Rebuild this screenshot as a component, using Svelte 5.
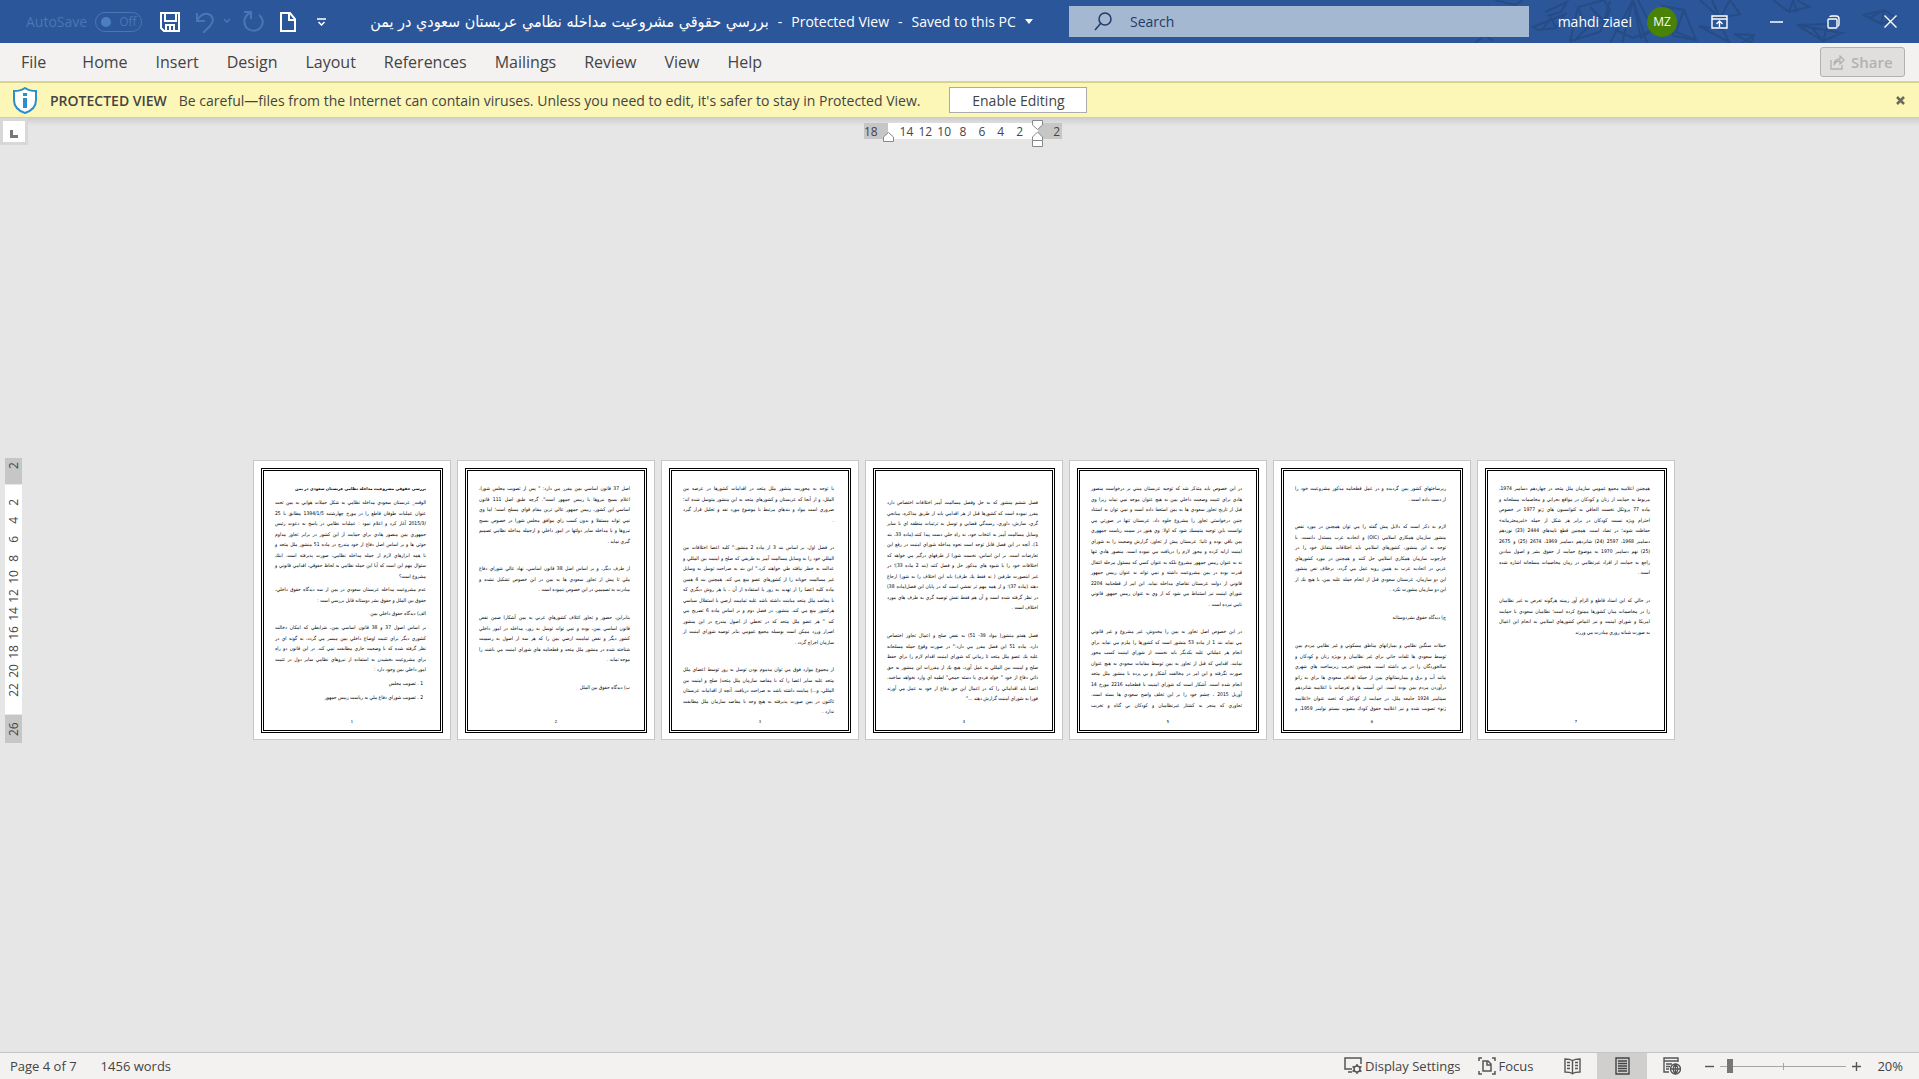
<script>
  const tabs = ['File', 'Home', 'Insert', 'Design', 'Layout', 'References', 'Mailings', 'Review', 'View', 'Help'];
  const across = ['14', '12', '10', '8', '6', '4', '2'];
  const down = ['2', '4', '6', '8', '10', '12', '14', '16', '18', '20', '22'];
  let zoom = $state(20);

  const pages = [
    {
      tight: true,
      paras: [
        { title: true, lines: ['بررسي حقوقي مشروعيت مداخله نظامي عربستان سعودي در يمن'] },
        {
          lines: [
            'الوقت_ عربستان سعودي مداخله نظامي به شكل حملات هوايي به يمن تحت',
            'عنوان عمليات طوفان قاطع را در مورخ چهارشنبه 1394/1/5 مطابق با 25',
            '/2015/3 آغاز كرد و اعلام نمود : عمليات نظامي در پاسخ به دعوت رئيس',
            'جمهوري يمن منصور هادي براي حمايت از اين كشور در برابر تجاوز مداوم',
            'حوثي ها و بر اساس اصل دفاع از خود مندرج در ماده 51 منشور ملل متحد و',
            'با همه ابزارهاي لازم از جمله مداخله نظامي، صورت پذيرفته است. اينك',
            'سئوال مهم اين است كه آيا اين حمله نظامي به لحاظ حقوقي، اقدامي قانوني و',
            'مشروع است؟'
          ]
        },
        {
          lines: [
            'عدم مشروعيت مداخله عربستان سعودي در يمن از سه ديدگاه حقوق داخلي،',
            'حقوق بين الملل و حقوق بشر دوستانه قابل بررسي است :'
          ]
        },
        { lines: ['الف) ديدگاه حقوق داخلي يمن'] },
        {
          lines: [
            'بر اساس اصول 37 و 38 قانون اساسي يمن، شرايطي كه امكان دخالت',
            'كشوري ديگر براي تثبيت اوضاع داخلي يمن ميسر مي گردد، به گونه اي در',
            'نظر گرفته شده كه با وضعيت جاري مطابقت نمي كند. در اين قانون دو راه',
            'براي مشروعيت بخشيدن به استفاده از نيروهاي نظامي ساير دول در تثبيت',
            'امور داخلي يمن وجود دارد :'
          ]
        },
        { item: true, lines: ['1 . تصويب مجلس'] },
        { item: true, lines: ['2 . تصويب شوراي دفاع ملي به رياست رييس جمهور'] }
      ]
    },
    {
      paras: [
        {
          lines: [
            'اصل 37 قانون اساسي يمن مقرر مي دارد: " پس از تصويب مجلس شورا،',
            'اعلام بسيج نيروها با رييس جمهور است". گرچه طبق اصل 111 قانون',
            'اساسي اين كشور، رييس جمهور عالي ترين مقام قواي مسلح است؛ اما وي',
            'نمي تواند مستقلا و بدون كسب راي موافق مجلس شورا در خصوص بسيج',
            'نيروها و يا مداخله ساير دولتها در امور داخلي و ازجمله مداخله نظامي تصميم',
            'گيري نمايد .'
          ]
        },
        {
          lines: [
            'از طرف ديگر، و بر اساس اصل 38 قانون اساسي، نهاد عالي شوراي دفاع',
            'ملي تا پيش از تجاوز سعودي ها به يمن در اين خصوص تشكيل نشده و',
            'مبادرت به تصميمي در اين خصوص ننموده است .'
          ]
        },
        {
          lines: [
            'بنابراين، حضور و تجاوز ائتلاف كشورهاي عربي به يمن آشكارا ضمن نقض',
            'قانون اساسي يمن، بوده و نمي تواند توسل به زور، مداخله در امور داخلي',
            'كشور ديگر و نقض تماميت ارضي يمن را كه هر سه از اصول به رسميت',
            'شناخته شده در منشور ملل متحد و قطعنامه هاي شوراي امنيت مي باشند را',
            'موجه نمايد .'
          ]
        },
        { lines: ['ب) ديدگاه حقوق بين الملل'] }
      ]
    },
    {
      paras: [
        {
          lines: [
            'با توجه به محوريت منشور ملل متحد در اقدامات كشورها در عرصه بين',
            'الملل، و از آنجا كه عربستان و كشورهاي متحد به اين منشور متوسل شده اند؛',
            'ضروري است مواد و بندهاي مرتبط با موضوع مورد نقد و تحليل قرار گيرد',
            '.'
          ]
        },
        {
          lines: [
            'در فصل اول، بر اساس بند 3 از ماده 2 منشور:" كليه اعضا اختلافات بين',
            'المللي خود را به وسايل مسالمت آميز به طريقي كه صلح و امنيت بين المللي و',
            'عدالت به خطر نيافتد طي خواهند كرد." اين بند به صراحت توسل به وسايل',
            'غير مسالمت جويانه را از كشورهاي عضو منع مي كند. همچنين بند 4 همين',
            'ماده كليه اعضا را از تهديد به زور يا استفاده از آن ، يا هر روش ديگري كه',
            'با مقاصد ملل متحد مباينت داشته باشد عليه تماميت ارضي يا استقلال سياسي',
            'هركشور منع مي كند. منشور، در فصل دوم و بر اساس ماده 6 تصريح مي',
            'كند " هر عضو ملل متحد كه در تخطي از اصول مندرج در اين منشور',
            'اصرار ورزد ممكن است بوسيله مجمع عمومي بنابر توصيه شوراي امنيت از',
            'سازمان اخراج گردد .'
          ]
        },
        {
          lines: [
            'از مجموع موارد فوق مي توان مذموم بودن توسل به زور توسط اعضاي ملل',
            'متحد عليه ساير اعضا را كه با مقاصد سازمان ملل متحد( صلح و امنيت بين',
            'المللي، و...) مباينت داشته باشد به صراحت دريافت. آنچه از اقدامات عربستان',
            'تاكنون در يمن صورت پذيرفته به هيچ وجه با مقاصد سازمان ملل مطابقت',
            'ندارد .'
          ]
        }
      ]
    },
    {
      lowered: true,
      paras: [
        {
          lines: [
            'فصل ششم منشور كه به حل وفصل مسالمت آميز اختلافات اختصاص دارد',
            'مقرر نموده است كه كشورها قبل از هر اقدامي بايد از طريق مذاكره، ميانجي',
            'گري، سازش، داوري، رسيدگي قضايي و توسل به ترتيبات منطقه اي يا ساير',
            'وسايل مسالمت آميز به انتخاب خود، به راه حلي دست پيدا كنند.(ماده 33، بند',
            '1). آنچه در اين فصل قابل توجه است نحوه مداخله شوراي امنيت در رفع اين',
            'تعارضات است. بر اين اساس، نخست شورا از طرفهاي درگير مي خواهد كه',
            'اختلافات خود را با شيوه هاي مذكور حل و فصل كنند (بند 2 ماده 33)؛ در',
            'غير اينصورت طرفين ( نه فقط يك طرف) بايد اين اختلاف را به شورا ارجاع',
            'دهند (ماده 37)؛ و از همه مهم تر نقشي است كه در پايان اين فصل(ماده 38)',
            'در نظر گرفته شده است و آن هم فقط نقش توصيه گري به طرف هاي مورد',
            'اختلاف است .'
          ]
        },
        {
          lines: [
            'فصل هفتم منشور( مواد 39- 51) به نقض صلح و اعمال تجاوز اختصاص',
            'دارد. ماده 51 اين فصل مقرر مي دارد:" در صورت وقوع حمله مسلحانه',
            'عليه يك عضو ملل متحد تا زماني كه شوراي امنيت اقدام لازم را براي حفظ',
            'صلح و امنيت بين المللي به عمل آورد، هيچ يك از مقررات اين منشور به حق',
            'ذاتي دفاع از خود " خواه فردي يا دسته جمعي" لطمه اي وارد نخواهد ساخت.',
            'اعضا بايد اقداماتي را كه در اعمال اين حق دفاع از خود به عمل مي آورند',
            'فورا به شوراي امنيت گزارش دهند ..."'
          ]
        }
      ]
    },
    {
      paras: [
        {
          lines: [
            'در اين خصوص بايد متذكر شد كه توجيه عربستان مبني بر درخواست منصور',
            'هادي براي تثبيت وضعيت داخلي يمن به هيچ عنوان موجه نمي نمايد زيرا وي',
            'قبل از تاريخ تجاوز سعودي ها به يمن استعفا داده است و نمي توان به استناد',
            'چنين درخواستي تجاوز را مشروع جلوه داد. عربستان تنها در صورتي مي',
            'توانست باين توجيه متمسك شود كه اولا: وي هنوز در سمت رياست جمهوري',
            'يمن باقي بوده و ثانيا: عربستان پيش از تجاوز، گزارش وضعيت را به شوراي',
            'امنيت ارايه كرده و مجوز لازم را دريافت مي نموده است. منصور هادي تنها',
            'نه به عنوان رييس جمهور مشروع بلكه به عنوان كسي كه مسئول مرحله انتقال',
            'قدرت بوده در يمن مشروعيت داشته و نمي تواند به عنوان رييس جمهور',
            'قانوني از دولت عربستان تقاضاي مداخله نمايد. اين امر از قطعنامه 2204',
            'شوراي امنيت نيز استنباط مي شود كه از وي به عنوان رييس جمهور قانوني',
            'نامي نبرده است .'
          ]
        },
        {
          open: true,
          lines: [
            'در اين خصوص اصل تجاوز به يمن را مخدوش، غير مشروع و غير قانوني',
            'مي نمايد بند 1 از ماده 53 منشور است كه كشورها را ملزم مي نمايد براي',
            'انجام هر عملياتي عليه يكديگر بايد نخست از شوراي امنيت كسب مجوز',
            'نمايند. اقدامي كه قبل از تجاوز به يمن توسط مقامات سعودي به هيچ عنوان',
            'صورت نگرفته و اين امر در مخالفت آشكار و بي پرده با منشور ملل متحد',
            'انجام شده است. آشكار است كه شوراي امنيت با قطعنامه 2216 مورخ 14',
            'آوريل 2015 ، چشم خود را بر اين تخلف واضح سعودي ها بسته است.',
            'تجاوزي كه منجر به كشتار غيرنظاميان و كودكان بي گناه و تخريب'
          ]
        }
      ]
    },
    {
      paras: [
        {
          lines: [
            'زيرساختهاي كشور يمن گرديده و در عمل قطعنامه مذكور مشروعيت خود را',
            'از دست داده است .'
          ]
        },
        {
          lines: [
            'لازم به ذكر است كه دلايل پيش گفته را مي توان همچنين در مورد نقض',
            'منشور سازمان همكاري اسلامي (OIC) و اتحاديه عرب مستدل دانست. با',
            'توجه به اين منشور، كشورهاي اسلامي بايد اختلافات متقابل خود را در',
            'چارچوب سازمان همكاري اسلامي حل كنند و همچنين در مورد كشورهاي',
            'عربي در اتحاديه عرب به همين رويه عمل مي گردد. برخلاف نص منشور',
            'اين دو سازمان، عربستان سعودي قبل از انجام حمله عليه يمن، با هيچ يك از',
            'اين دو سازمان مشورت نكرد .'
          ]
        },
        { lines: ['ج) ديدگاه حقوق بشردوستانه'] },
        {
          open: true,
          lines: [
            'حملات سنگين نظامي و بمبارانهاي مناطق مسكوني و غير نظامي مردم يمن',
            'توسط سعودي ها تلفات جاني براي غير نظاميان و بويژه زنان و كودكان و',
            'سالخوردگان را در پي داشته است. همچنين تخريب زيرساخت هاي شهري',
            'مانند آب و برق و بيمارستانهاي يمن از جمله اهداف سعودي ها براي به زانو',
            'درآوردن مردم يمن بوده است. اين آسيب ها و تعرضات با اعلاميه شانزدهم',
            'سپتامبر 1924 جامعه ملل، در حمايت از كودكان كه تحت عنوان «اعلاميه',
            'ژنو» تصويب شده و نيز اعلاميه حقوق كودك مصوب بيستم نوامبر 1959، و'
          ]
        }
      ]
    },
    {
      paras: [
        {
          lines: [
            'همچنين اعلاميه مجمع عمومي سازمان ملل متحد در چهاردهم دسامبر 1974،',
            'مربوط به حمايت از زنان و كودكان در مواقع بحراني و مخاصمات مسلحانه و',
            'ماده 77 پروتكل نخست الحاقي به كنوانسيون هاي ژنو 1977 در خصوص',
            'احترام ويژه نسبت كودكان در برابر هر شكل از حمله «غيرمحترمانه»',
            'حفاظت شوند؛ در تضاد است. همچنين قطع نامه‌هاي 2444 (23) نوزدهم',
            'دسامبر 1968، 2597 (24) شانزدهم دسامبر 1969، 2674 (25) و 2675',
            '(25) نهم دسامبر 1970 به موضوع حمايت از حقوق بشر و اصول بنيادين',
            'راجع به حمايت از افراد غيرنظامي در زمان مخاصمات مسلحانه اشاره شده',
            'است .'
          ]
        },
        {
          lines: [
            'در حالي كه اين اسناد قاطع و الزام آور زمينه هرگونه تعرض به غير نظاميان',
            'را در مخاصمات ميان كشورها ممنوع كرده است؛ نظاميان سعودي با حمايت',
            'امريكا و شوراي امنيت و نيز اغماض كشورهاي اسلامي به انجام اين اعمال',
            'به صورت شبانه روزي مبادرت مي ورزند'
          ]
        }
      ]
    }
  ];
</script>

<div class="app">
  <header class="titlebar">
    <svg class="pattern" viewBox="0 0 519 43" width="519" height="43" aria-hidden="true">
      <g fill="none" stroke="#264b85" stroke-width="2">
        <path d="M95 0l20 5 8-5M145 12l22-10-6 10-14 4M133 27l32-13-9 14-18 2zM143 29l8-11 5 10M170 41l8-34 26-7 6 10-10 22zM178 7l8 22 18-8 6-20M186 29l-12 12M204 21l-14-14M210 43l23-43 14 43M233 0l-11 43M233 0l8 38 14-10M215 30l18 8 20-8-15-30M262 6l22 4 12 30-22-4zM284 10l-8 22 20 8M300 0l20 18 20-4-10-14M312 0l8 18 10-18M299 26l30 16-6-12zM334 34l20 1-3 8zM342 43l12-8M373 0l16 12 20-5-12-7M389 12l4-12 4 12M397 25l45 8-19 8zM412 28l11 13 5-17-31 1M464 15l20-5-3 14zM470 18l14-8 12 8-15 6M75 43l10-8 8 6"/>
      </g>
    </svg>
    <div class="quick">
      <label class="autosave">AutoSave
        <button class="toggle" disabled><i></i>Off</button>
      </label>
      <button class="icon save" aria-label="Save">
        <svg width="20" height="20" viewBox="0 0 20 20" fill="none" stroke="#fff" stroke-width="2"><path d="M1 1h18v18H4l-3-3zM5 1v8h11V1M6 19v-6h8v6M10 14v4"/></svg>
      </button>
      <button class="icon undo" aria-label="Undo" disabled>
        <svg width="36" height="22" viewBox="0 0 36 22" fill="none" stroke="#4b75b3" stroke-width="2"><path d="M2 2v8h8M2 10c3-6 7-8 11-7 6 2 6 8 2 12l-7 7" /><path d="M29 8l3 3 3-3" stroke-width="1.5"/></svg>
      </button>
      <button class="icon redo" aria-label="Repeat" disabled>
        <svg width="21" height="21" viewBox="0 0 21 21" fill="none" stroke="#4b75b3" stroke-width="2"><path d="M1 1h7v7M7 2C1 5 0 11 3 16c4 5 11 5 15 0 3-4 2-9-2-12"/></svg>
      </button>
      <button class="icon new" aria-label="New">
        <svg width="16" height="20" viewBox="0 0 16 20" fill="none" stroke="#fff" stroke-width="2"><path d="M1 1h9l5 6v12H1zM9 1v7h6"/></svg>
      </button>
      <button class="icon more" aria-label="Customize Quick Access Toolbar">
        <svg width="10" height="8" viewBox="0 0 10 8" fill="none" stroke="#fff" stroke-width="1.5"><path d="M0 1h9M1.500 4l3 3 3-3"/></svg>
      </button>
    </div>
    <h1 class="doc"><bdi lang="fa" dir="rtl">بررسي حقوقي مشروعيت مداخله نظامي عربستان سعودي در يمن</bdi><span>-</span><span>Protected View</span><span>-</span><span>Saved to this PC</span><svg width="8" height="5" viewBox="0 0 8 5"><path d="M0 0h8L4 5z" fill="#fff"/></svg></h1>
    <label class="search">
      <svg width="18" height="19" viewBox="0 0 18 19" fill="none" stroke="#1f3b68" stroke-width="1.500"><circle cx="11" cy="7" r="6"/><path d="M7 11l-6 7"/></svg>
      <input type="text" placeholder="Search" aria-label="Search" />
    </label>
    <div class="account"><span>mahdi ziaei</span><span class="avatar">MZ</span></div>
    <div class="window">
      <button class="icon" aria-label="Ribbon Display Options"><svg width="17" height="14" viewBox="0 0 17 14" fill="none" stroke="#fff" stroke-width="1.400"><path d="M1 1h15v12H1zM1 4h15M8.500 12V6M5.500 9l3-3 3 3"/></svg></button>
      <div class="frame-buttons">
        <button class="icon" aria-label="Minimize"><svg width="13" height="14" viewBox="0 0 13 14" stroke="#fff" stroke-width="1.500"><path d="M0 7h13"/></svg></button>
        <button class="icon" aria-label="Restore"><svg width="13" height="14" viewBox="0 0 13 14" fill="none" stroke="#fff" stroke-width="1.400"><rect x="1" y="4" width="9" height="9" rx="1"/><path d="M3 2c0-1 1-1 2-1h4c2 0 3 1 3 3v5c0 1 0 2-1 2"/></svg></button>
        <button class="icon" aria-label="Close"><svg width="13" height="13" viewBox="0 0 13 13" stroke="#fff" stroke-width="1.400"><path d="M.5.5l12 12M12.500.5l-12 12"/></svg></button>
      </div>
    </div>
  </header>

  <nav class="ribbon">
    {#each tabs as tab}
      <button class="tab">{tab}</button>
    {/each}
    <button class="share" disabled>
      <svg width="15" height="15" viewBox="0 0 15 15" fill="none" stroke="#b3b1af" stroke-width="1.300"><path d="M1 5v9h11v-4M4 10c0-4 2-6 6-6V1l4 4-4 4V6C7 6 5 7 4 10z"/></svg>
      Share
    </button>
  </nav>

  <div class="notice">
    <svg width="24" height="27" viewBox="0 0 24 27"><path d="M12 1c3 2 7 3 11 3v9c0 7-5 11-11 13C6 24 1 20 1 13V4c4 0 8-1 11-3z" fill="#fff" stroke="#2b8fcf" stroke-width="2"/><path d="M10 6h4v3h-4zM10 11h4v10h-4z" fill="#2b8fcf"/></svg>
    <strong>PROTECTED VIEW</strong>
    <p>Be careful—files from the Internet can contain viruses. Unless you need to edit, it's safer to stay in Protected View.</p>
    <button class="enable">Enable Editing</button>
    <button class="dismiss" aria-label="Close message"><svg width="9" height="9" viewBox="0 0 9 9" stroke="#6b6a5c" stroke-width="2.500"><path d="M1 1l7 7M8 1L1 8"/></svg></button>
  </div>

  <main class="work">
    <div class="topruler">
      <button class="corner" aria-label="Tab selector"><svg width="8" height="8" viewBox="0 0 8 8"><path d="M0 0h3v5h5v3H0z" fill="#777"/></svg></button>
      <div class="hruler">
        <div class="edge left">18<svg class="mark" width="11" height="10" viewBox="0 0 11 10"><path d="M.5 9.500V5l5-4.500 5 4.500v4.500z" fill="#fff" stroke="#888"/></svg></div>
        <div class="ticks">{#each across as n}<span>{n}</span>{/each}</div>
        <div class="edge right">2<svg class="mark" width="11" height="28" viewBox="0 0 11 28"><path d="M.5.5h10V5l-5 4.500L.5 5zM.5 20.500V17l5-5 5 5v3.500zM.5 20.500h10v6H.5z" fill="#fff" stroke="#888"/></svg></div>
      </div>
    </div>
    <div class="canvas">
      <div class="vruler">
        <div class="vedge">2</div>
        <div class="vticks">{#each down as n}<span>{n}</span>{/each}</div>
        <div class="vedge low">26</div>
      </div>
      <div class="sheets">
        {#each pages as page, i}
          <article class="sheet" lang="fa" dir="rtl">
            <div class="frame" class:tight={page.tight} class:lowered={page.lowered}>
              {#each page.paras as para}
                <p class="para" class:title={para.title} class:item={para.item} class:open={para.open}>
                  {#each para.lines as line}<span class="line">{line}</span>{/each}
                </p>
              {/each}
              <span class="folio">{i + 1}</span>
            </div>
          </article>
        {/each}
      </div>
    </div>
  </main>

  <footer class="status">
    <span>Page 4 of 7</span>
    <span class="words">1456 words</span>
    <button class="tool display">
      <svg width="19" height="18" viewBox="0 0 19 18" fill="none" stroke="#555" stroke-width="1.500"><path d="M17 7V1H1v11h7M4 15h4"/><circle cx="13" cy="12" r="3"/><path d="M13 7v2M13 15v2M8.500 9.500l2 1M15.500 13.500l2 1M17.500 9.500l-2 1M10.500 13.500l-2 1"/></svg>
      Display Settings
    </button>
    <button class="tool focus">
      <svg width="18" height="18" viewBox="0 0 18 18" fill="none" stroke="#555" stroke-width="1.500"><path d="M4 1H1v3M14 1h3v3M4 17H1v-3M14 17h3v-3M5 4h5l3 3v7H5zM9 4v4h4"/></svg>
      Focus
    </button>
    <button class="view" aria-label="Read Mode"><svg width="17" height="17" viewBox="0 0 17 17" fill="none" stroke="#555" stroke-width="1.400"><path d="M8.500 2.500C6 1 4 1 1 1v13c3 0 5 0 7.500 1.500C11 14 13 14 16 14V1c-3 0-5 0-7.500 1.500zM8.500 2.500v14M3 4.500h3M3 7.500h3M3 10.500h3M11 4.500h3M11 7.500h3M11 10.500h3"/></svg></button>
    <button class="view on" aria-label="Print Layout"><svg width="15" height="18" viewBox="0 0 15 18" fill="none" stroke="#444" stroke-width="1.400"><path d="M1 1h13v16H1zM3 4h9M3 6.500h9M3 9h9M3 11.500h9M3 14h9"/></svg></button>
    <button class="view" aria-label="Web Layout"><svg width="18" height="18" viewBox="0 0 18 18" fill="none" stroke="#555" stroke-width="1.400"><path d="M15 5V1H1v14h5M1 4h14M3 7h6M3 9.500h4M3 12h3"/><circle cx="12.500" cy="12" r="5"/><path d="M7.500 12h10M12.500 7v10M12.500 7c-3 3-3 7 0 10M12.500 7c3 3 3 7 0 10"/></svg></button>
    <button class="step" aria-label="Zoom Out"><svg width="9" height="9" viewBox="0 0 9 9" stroke="#555" stroke-width="1.400"><path d="M0 4.500h9"/></svg></button>
    <input class="zoom" type="range" min="10" max="190" bind:value={zoom} aria-label="Zoom" />
    <button class="step" aria-label="Zoom In"><svg width="9" height="9" viewBox="0 0 9 9" stroke="#555" stroke-width="1.400"><path d="M0 4.500h9M4.500 0v9"/></svg></button>
    <span class="percent">{zoom}%</span>
  </footer>
</div>

<style>
  :global(body) { margin: 0; }
  .app {
    display: flex;
    flex-direction: column;
    min-height: 100vh;
    font-family: "Open Sans", "DejaVu Sans", sans-serif;
    font-size: 14px;
    color: #444;
    background: #e6e6e6;
  }
  button, input { font: inherit; color: inherit; }
  button { border: 0; background: none; padding: 0; display: flex; align-items: center; }
  svg { display: block; flex: none; }

  .titlebar {
    position: relative;
    display: flex;
    align-items: center;
    height: 43px;
    background: #2b579a;
    color: #fff;
    white-space: nowrap;
  }
  .pattern { position: absolute; right: 0; top: 0; }
  .quick { display: flex; align-items: center; padding-left: 26px; }
  .autosave { display: flex; align-items: center; gap: 8px; color: #4b75b3; font-size: 14px; }
  .toggle {
    box-sizing: border-box;
    width: 47px;
    height: 20px;
    border: 1px solid #4b75b3;
    border-radius: 10px;
    padding-left: 5px;
    gap: 8px;
    font-size: 12px;
    color: #4b75b3;
  }
  .toggle i { width: 10px; height: 10px; border-radius: 5px; background: #4b7fc0; }
  .save { margin-left: 18px; }
  .undo { margin-left: 15px; }
  .redo { margin-left: 12px; }
  .new { margin-left: 16px; }
  .more { margin-left: 21px; }
  .doc {
    display: flex;
    align-items: center;
    gap: 9px;
    margin: 0 0 0 43px;
    font-size: 14px;
    font-weight: 400;
    line-height: 20px;
  }
  .doc bdi { font-family: "DejaVu Sans Condensed", "DejaVu Sans", sans-serif; font-size: 16px; }
  .search {
    position: relative;
    display: flex;
    align-items: center;
    flex: 0 1 410px;
    height: 31px;
    margin-left: auto;
    padding: 0 25px;
    gap: 18px;
    background: #a5b8d1;
  }
  .search input { flex: 1; min-width: 0; padding: 0; border: 0; outline: 0; background: none; color: #1f3b68; }
  .search input::placeholder { color: #1f3b68; opacity: 1; }
  .account { position: relative; display: flex; align-items: center; justify-content: flex-end; gap: 15px; width: 148px; }
  .avatar {
    width: 30px;
    height: 30px;
    border-radius: 15px;
    background: #498205;
    font-size: 12px;
    line-height: 30px;
    text-align: center;
  }
  .window { position: relative; display: flex; align-items: center; gap: 42px; padding: 0 22px 0 34px; }
  .frame-buttons { display: flex; align-items: center; gap: 44px; }

  .ribbon {
    display: flex;
    align-items: center;
    gap: 28px;
    height: 38px;
    padding: 0 14px 0 21px;
    background: #f3f2f1;
    border-bottom: 1px solid #d2d0ce;
    font-size: 16px;
  }
  .tab:first-child { margin-right: 8px; }
  .share {
    box-sizing: border-box;
    width: 85px;
    height: 30px;
    margin-left: auto;
    padding-left: 9px;
    gap: 6px;
    border: 1px solid #b3b1af;
    border-radius: 3px;
    background: #e1dfdd;
    color: #b3b1af;
    font-size: 15px;
    font-weight: 600;
  }

  .notice {
    display: flex;
    align-items: center;
    height: 34px;
    padding: 0 14px 0 13px;
    background: #fcf7b6;
    border-top: 1px solid #d6d28b;
    border-bottom: 1px solid #d6d28b;
    white-space: nowrap;
  }
  .notice strong { margin-left: 13px; font-weight: 600; }
  .notice p { margin: 0 0 0 12px; }
  .enable {
    box-sizing: border-box;
    justify-content: center;
    width: 138px;
    height: 26px;
    margin-left: 29px;
    border: 1px solid #ababab;
    background: #fff;
  }
  .dismiss { margin-left: auto; }

  .work { display: flex; flex-direction: column; flex: 1; background: linear-gradient(#cfcfcf, #e6e6e6 8px); }
  .topruler { display: flex; justify-content: space-between; height: 30px; padding-right: 857px; }
  .corner {
    box-sizing: border-box;
    justify-content: center;
    width: 28px;
    height: 27px;
    border: 3px solid #d8d8d8;
    background: #fff;
  }
  .corner svg { margin-top: 5px; }
  .hruler { display: flex; height: 16px; margin-top: 5px; font-size: 12px; line-height: 17px; }
  .edge { position: relative; width: 24px; background: #c6c6c6; }
  .left .mark { position: absolute; right: -6px; top: 9px; }
  .right { text-align: right; box-sizing: border-box; padding-right: 2px; }
  .right .mark { position: absolute; left: -6px; top: -3px; }
  .ticks { display: flex; width: 132px; padding: 0 9px; background: #fff; }
  .ticks span { flex: 1; text-align: center; }

  .canvas { display: flex; align-items: center; flex: 1; padding-left: 5px; }
  .vruler { display: flex; flex-direction: column; width: 17px; font-size: 12px; line-height: 17px; }
  .vedge, .vticks span { writing-mode: vertical-rl; transform: rotate(180deg); text-align: center; }
  .vedge { box-sizing: border-box; height: 26px; padding-bottom: 4px; padding-top: 4px; background: #c6c6c6; text-align: end; }
  .vedge.low { height: 28px; padding: 0; text-align: center; }
  .vticks { display: flex; flex-direction: column; height: 207px; padding: 8px 0 14px; border: solid #e6e6e6; border-width: 1px 0; background: #fff; }
  .vedge:first-child { padding-top: 0; }
  .vticks span { flex: 1; }
  .sheets { display: flex; justify-content: center; flex: 1; gap: 6px; padding-right: 13px; }
  .sheet { box-sizing: border-box; width: 198px; height: 280px; padding: 7px; border: 1px solid #c6c6c6; background: #fff; }
  .frame {
    box-sizing: border-box;
    position: relative;
    height: 265px;
    padding: 12px 14px 0 11px;
    border: 3px double #000;
    color: #000;
    font-family: "DejaVu Sans Condensed", "DejaVu Sans", sans-serif;
    font-size: 5px;
  }
  .frame.lowered { padding-top: 26px; }
  .para { margin: 0 0 17px; }
  .tight .para { margin-bottom: 3px; }
  .line { display: block; height: 11px; line-height: 11px; white-space: nowrap; text-align: justify; text-align-last: justify; }
  .line:nth-child(even) { height: 10px; line-height: 10px; }
  .line:last-child { text-align-last: start; }
  .open .line:last-child { text-align-last: justify; }
  .title { font-family: "DejaVu Sans", sans-serif; font-size: 4px; font-weight: 700; }
  .item { padding-right: 3px; }
  .folio { position: absolute; left: 0; right: 0; bottom: 3px; font-size: 4px; line-height: 10px; text-align: center; }

  .status {
    display: flex;
    align-items: center;
    height: 26px;
    padding: 0 16px 0 10px;
    border-top: 1px solid #c6c4c2;
    background: #f3f2f1;
    font-size: 13px;
    white-space: nowrap;
  }
  .words { margin-left: 24px; }
  .tool { gap: 2px; }
  .display { margin-left: auto; }
  .focus { margin: 0 14px 0 18px; }
  .view { justify-content: center; width: 50px; height: 26px; }
  .view.on { background: #d0cfce; }
  .step { margin: 0 6px; }
  .view + .step { margin-left: 8px; }
  .zoom { appearance: none; width: 126px; height: 16px; margin: 0; background: linear-gradient(#a6a6a6, #a6a6a6) center / 100% 1px no-repeat, linear-gradient(#a6a6a6, #a6a6a6) center / 1px 7px no-repeat; }
  .zoom::-webkit-slider-thumb { appearance: none; width: 6px; height: 14px; background: #777; }
  .percent { margin-left: 10px; }
</style>
